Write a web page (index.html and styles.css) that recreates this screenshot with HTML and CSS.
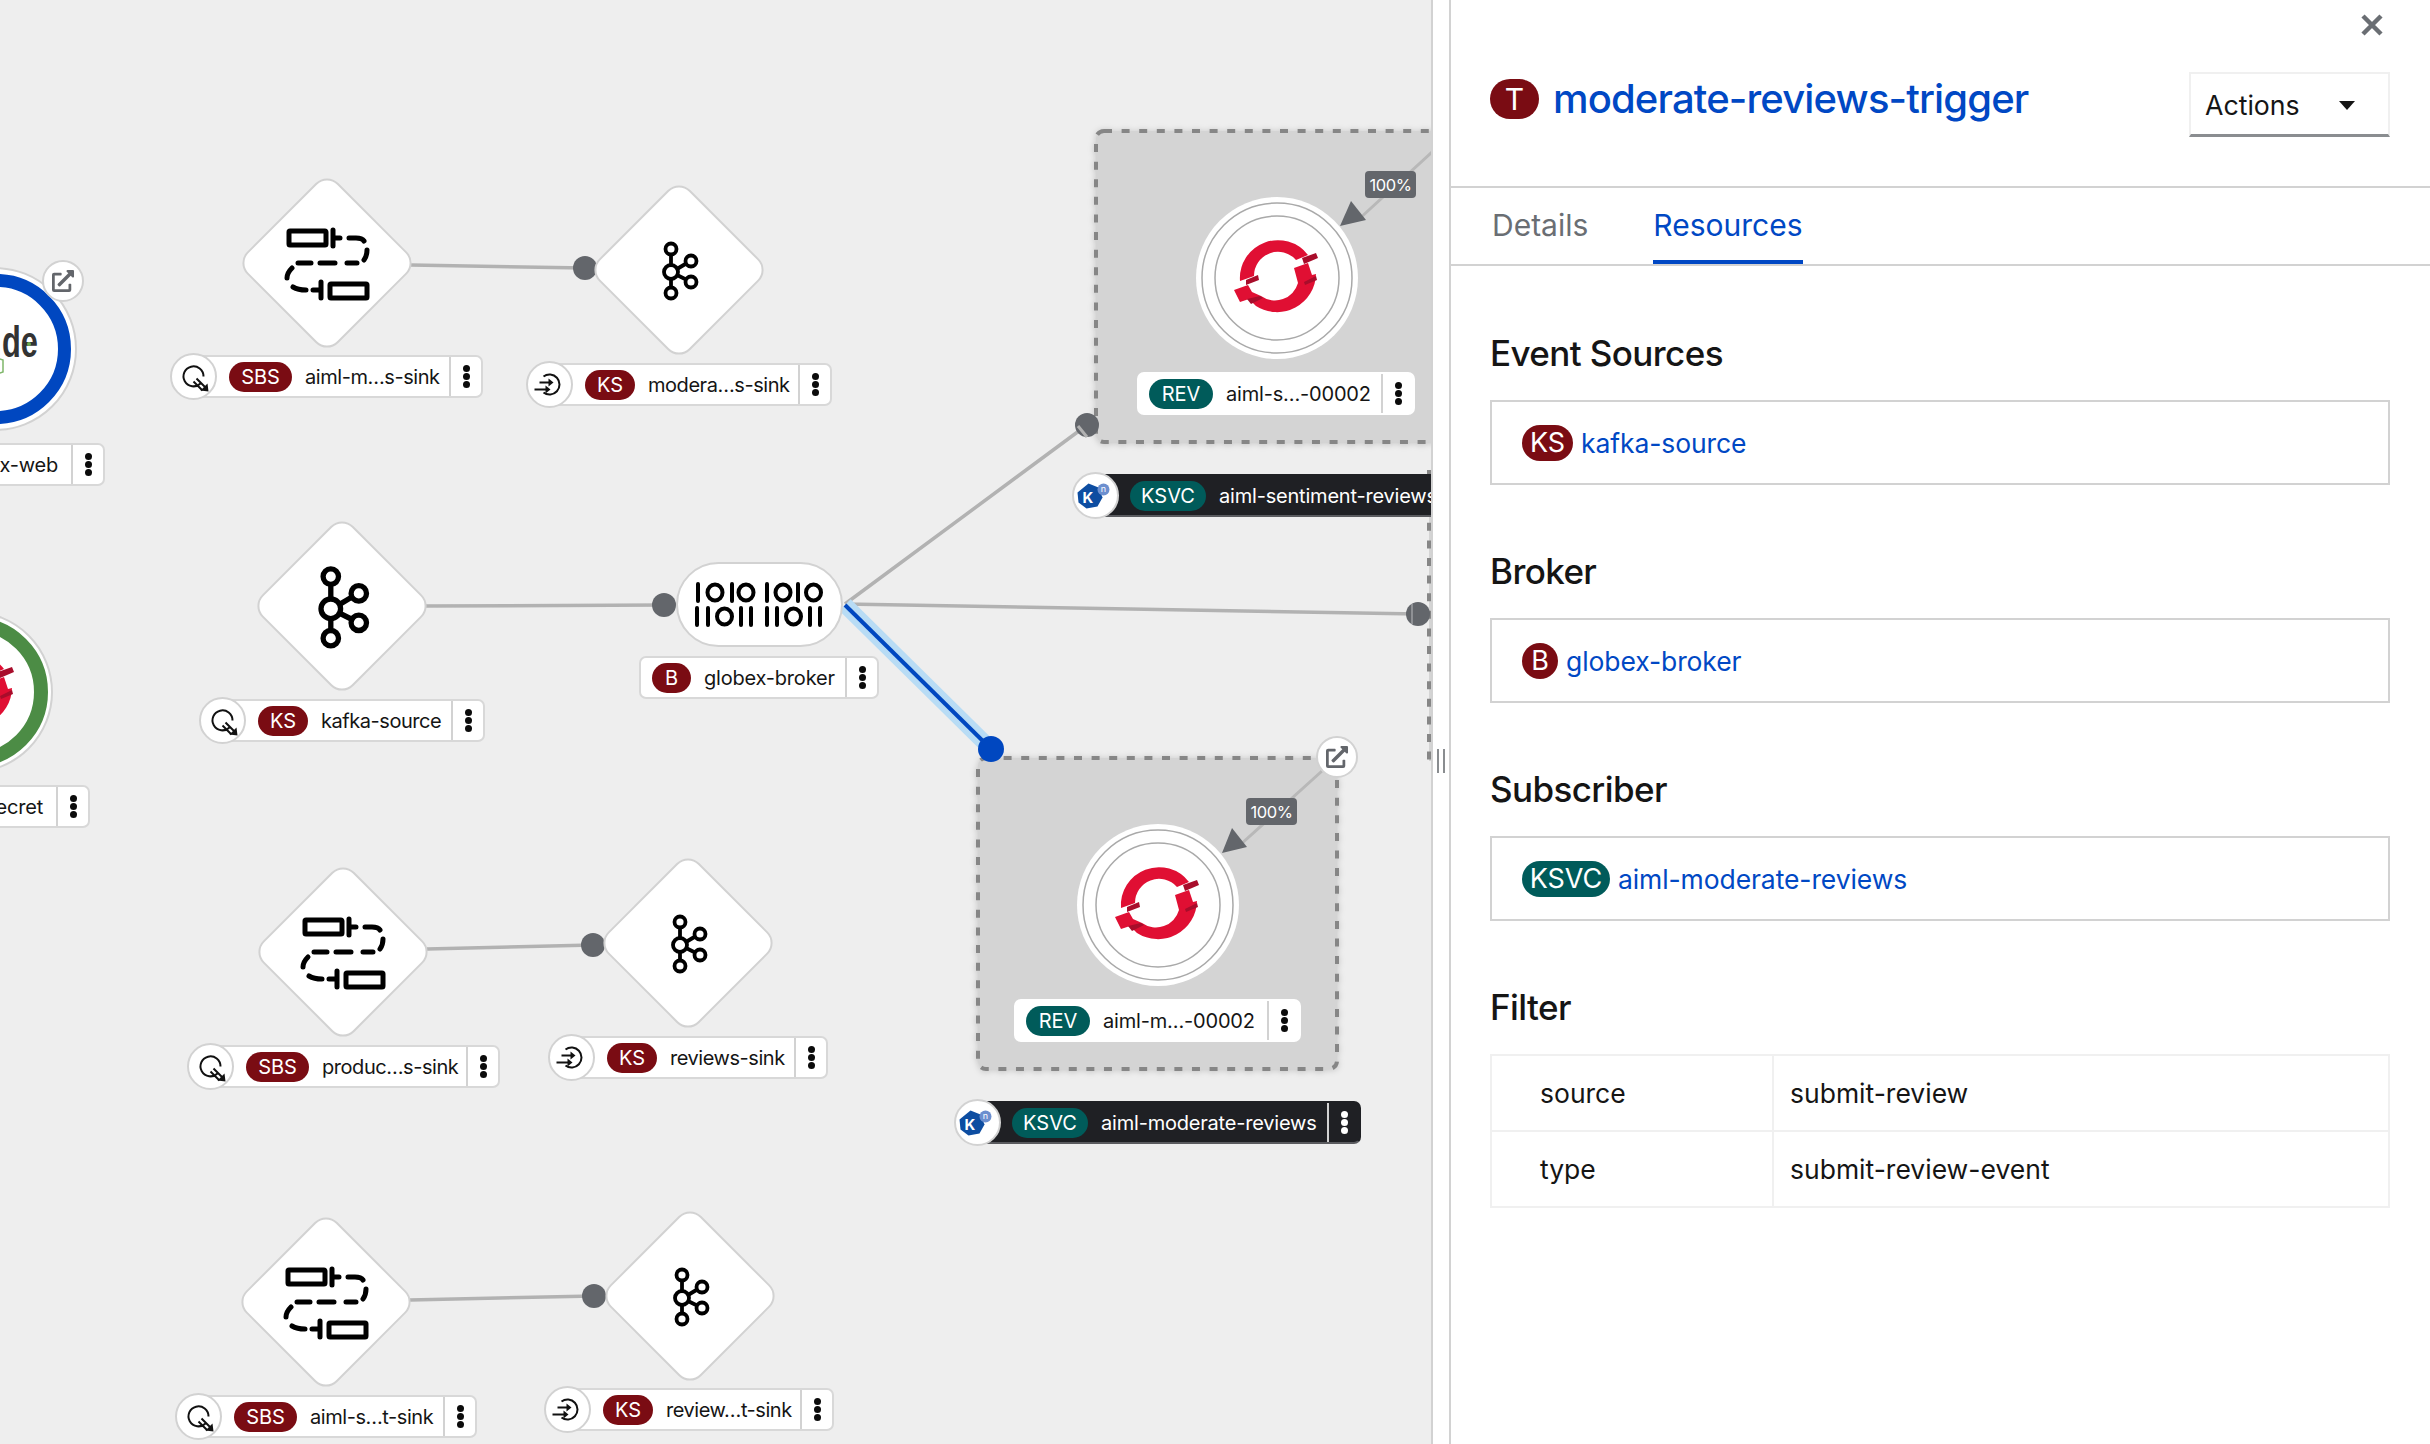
FILE: index.html
```html
<!DOCTYPE html>
<html lang="en">
<head>
<meta charset="utf-8">
<title>Topology</title>
<link rel="stylesheet" href="styles.css">
</head>
<body>
<svg class="defs" width="0" height="0" aria-hidden="true">
  <defs>
    <g id="diamond"><rect x="-63.5" y="-63.5" width="127" height="127" rx="15" transform="rotate(45)" class="node-shape"/></g>
    <g id="sbs" class="ico-stroke">
      <rect x="-38" y="-32" width="37" height="14" rx="1"/>
      <path d="M6-33V-17M6-25H13M22-25H29Q35-25 37-22M40-13Q40-7 37-3M30 0H20M8 0H-7M-16 0H-29M-35 5Q-40 10-40 15M-34 24Q-29 27-21 27M-14 27H-7M-6 19V35"/>
      <rect x="3" y="21" width="37" height="14" rx="1"/>
    </g>
    <g id="kafka" class="ico-kafka">
      <path d="M-8-16V18M-2-1L8-7M-2 5L8 10"/>
      <circle cx="-8" cy="2" r="7"/>
      <circle cx="-8" cy="-21" r="5.5"/>
      <circle cx="-8" cy="23" r="5.5"/>
      <circle cx="12" cy="-9" r="5.5"/>
      <circle cx="12" cy="12" r="5.5"/>
    </g>
    <g id="bits" class="ico-bits">
      <path d="M698 584V601M732 584V601M767 584V601M798 584V601M697 608V625M708 608V625M741 608V625M751 608V625M767 608V625M777 608V625M810 608V625M820 608V625"/>
      <ellipse cx="715" cy="592.500" rx="7.500" ry="8"/>
      <ellipse cx="746" cy="592.500" rx="7.500" ry="8"/>
      <ellipse cx="783" cy="592.500" rx="7.500" ry="8"/>
      <ellipse cx="813.500" cy="592.500" rx="7.500" ry="8"/>
      <ellipse cx="724.500" cy="616.500" rx="7.500" ry="8"/>
      <ellipse cx="793.500" cy="616.500" rx="7.500" ry="8"/>
    </g>
    <g id="shift">
      <path class="logo-red" d="M-37 3A38 38 0 0 1 31-23L19-18A24 24 0 0 0-23-2Z"/>
      <path class="logo-red" d="M17-10L31-15L35-3L39-4A39 39 0 0 1-21 28L-28 21L-37 24L-43 12L-29 7L-25 14L-16 18A24 24 0 0 0 21 5Z"/>
      <path class="logo-dark" d="M25-20L39-25L41-20L27-14ZM27 4L39-2L40 2L28 7ZM-31 2L-19-3L-18 2L-31 7ZM-30 21L-17 18L-14 20L-26 26Z"/>
    </g>
    <g id="rev-node">
      <circle r="81" class="rev-outer"/>
      <circle r="75" class="rev-ring"/>
      <circle r="62" class="rev-ring"/>
      <use href="#shift"/>
    </g>
    <g id="link">
      <circle r="20" class="link-bg"/>
      <path class="link-ico" transform="translate(-11,-11) scale(.043)" d="M432,320H400a16,16,0,0,0-16,16V448H64V128H208a16,16,0,0,0,16-16V80a16,16,0,0,0-16-16H48A48,48,0,0,0,0,112V464a48,48,0,0,0,48,48H400a48,48,0,0,0,48-48V336A16,16,0,0,0,432,320ZM488,0h-128c-21.37,0-32.05,25.91-17,41l35.73,35.73L135,320.37a24,24,0,0,0,0,34L157.67,377a24,24,0,0,0,34,0L435.28,133.32,471,169c15,15,41,4.5,41-17V24A24,24,0,0,0,488,0Z"/>
    </g>
    <g id="sink">
      <path class="ico-thin" d="M7 7A10 10 0 1 1 10 0M3 2L12 11M0 5L9 14"/>
      <path class="ico-head" d="M15 15L14 7L7 14Z"/>
    </g>
    <g id="source">
      <path class="ico-thin" d="M-6-8A10 10 0 1 1-6 8M-10-2H1M-15 5H-2"/>
      <path class="ico-head" d="M4-2L-1-6V2ZM1 5L-4 1V9Z"/>
    </g>
    <g id="kn">
      <path class="kn-hex" d="M-3-13L7-9L11 1L6 10L-5 12L-13 6L-14-4Z" transform="translate(-4,1)"/>
      <circle cx="8" cy="-6" r="6" class="kn-dot"/>
    </g>
  </defs>
</svg>

<main class="app">
  <section class="canvas">
    <svg class="stage" width="1431" height="1444">
      <!-- groups -->
      <rect x="1096" y="131" width="360" height="311" rx="8" class="group"/>
      <rect x="978" y="758" width="359" height="311" rx="8" class="group"/>
      <rect x="1429" y="470" width="10" height="291" class="group-sliver"/>
      <path d="M1429 470V761" class="group-edge"/>

      <!-- plain connectors -->
      <path class="edge" d="M411 265L585 268M425 606L664 605M845 604L1418 614M845 604L1087 425M427 949L593 945M410 1300L594 1296"/>
      <path class="edge-soft" d="M1322 771L1240 845M1432 152L1358 220"/>
      <path class="edge-glow" d="M845 605L991 749"/>
      <path class="edge-active" d="M845 605L991 749"/>

      <!-- connector ends -->
      <circle cx="585" cy="268" r="12" class="dot"/>
      <circle cx="664" cy="605" r="12" class="dot"/>
      <circle cx="593" cy="945" r="12" class="dot"/>
      <circle cx="594" cy="1296" r="12" class="dot"/>
      <circle cx="1087" cy="425" r="12" class="dot"/>
      <path d="M1078 426L1087 437" class="dot-strip"/>
      <circle cx="1418" cy="614" r="12" class="dot"/>
      <path d="M1412 604V624" class="dot-strip-v"/>
      <circle cx="991" cy="749" r="13" class="dot-active"/>

      <!-- event nodes -->
      <use href="#diamond" x="327" y="263"/>
      <use href="#sbs" x="327" y="263"/>
      <use href="#diamond" x="679" y="270"/>
      <use href="#kafka" x="679" y="270"/>
      <use href="#diamond" x="342" y="606"/>
      <g transform="translate(342,606) scale(1.4)"><use href="#kafka"/></g>
      <use href="#diamond" x="343" y="952"/>
      <use href="#sbs" x="343" y="952"/>
      <use href="#diamond" x="688" y="943"/>
      <use href="#kafka" x="688" y="943"/>
      <use href="#diamond" x="326" y="1302"/>
      <use href="#sbs" x="326" y="1302"/>
      <use href="#diamond" x="690" y="1296"/>
      <use href="#kafka" x="690" y="1296"/>

      <!-- broker -->
      <rect x="677" y="563" width="165" height="83" rx="41.500" class="node-shape"/>
      <use href="#bits"/>

      <!-- revisions -->
      <use href="#rev-node" x="1277" y="278"/>
      <use href="#rev-node" x="1158" y="905"/>
      <path class="arrow" d="M1222 853L1232 828L1247 847Z"/>
      <path class="arrow" d="M1340 226L1351 201L1366 220Z"/>
      <rect x="1246" y="798" width="51" height="27" rx="4" class="tag"/>
      <text x="1271.500" y="818" class="tag-text">100%</text>
      <rect x="1365" y="171" width="51" height="27" rx="4" class="tag"/>
      <text x="1390.500" y="191" class="tag-text">100%</text>
      <use href="#link" x="1337" y="757"/>

      <!-- cut-off workloads at the left edge -->
      <circle cx="-5" cy="349" r="81" class="rev-outer-line"/>
      <circle cx="-4" cy="349" r="68.500" class="ring-blue"/>
      <text transform="translate(38,357) scale(.7,1)" class="node-word">de</text>
      <circle cx="29" cy="344" r="2" class="node-green"/>
      <path d="M-3 358L3 360V372L-3 374" class="node-hex"/>
      <use href="#link" x="63" y="281"/>
      <circle cx="-28" cy="692" r="80" class="rev-outer-line"/>
      <circle cx="-27" cy="692" r="68" class="ring-green"/>
      <use href="#shift" x="-27" y="692"/>
    </svg>

    <div class="label l-sbs-a"><span class="lbl-icon"><svg width="43" height="43" viewBox="-21.500 -21.500 43 43"><use href="#sink"/></svg></span><span class="badge b-red b-sbs">SBS</span><span class="name">aiml-m…s-sink</span><span class="kebab"><i></i><i></i><i></i></span></div>
    <div class="label l-ks-a"><span class="lbl-icon"><svg width="43" height="43" viewBox="-21.500 -21.500 43 43"><use href="#source"/></svg></span><span class="badge b-red b-ks">KS</span><span class="name">modera…s-sink</span><span class="kebab"><i></i><i></i><i></i></span></div>
    <div class="label l-ks-src"><span class="lbl-icon"><svg width="43" height="43" viewBox="-21.500 -21.500 43 43"><use href="#sink"/></svg></span><span class="badge b-red b-ks">KS</span><span class="name">kafka-source</span><span class="kebab"><i></i><i></i><i></i></span></div>
    <div class="label l-broker"><span class="badge b-red b-b">B</span><span class="name">globex-broker</span><span class="kebab"><i></i><i></i><i></i></span></div>
    <div class="label l-sbs-b"><span class="lbl-icon"><svg width="43" height="43" viewBox="-21.500 -21.500 43 43"><use href="#sink"/></svg></span><span class="badge b-red b-sbs">SBS</span><span class="name">produc…s-sink</span><span class="kebab"><i></i><i></i><i></i></span></div>
    <div class="label l-ks-b"><span class="lbl-icon"><svg width="43" height="43" viewBox="-21.500 -21.500 43 43"><use href="#source"/></svg></span><span class="badge b-red b-ks">KS</span><span class="name">reviews-sink</span><span class="kebab"><i></i><i></i><i></i></span></div>
    <div class="label l-sbs-c"><span class="lbl-icon"><svg width="43" height="43" viewBox="-21.500 -21.500 43 43"><use href="#sink"/></svg></span><span class="badge b-red b-sbs">SBS</span><span class="name">aiml-s…t-sink</span><span class="kebab"><i></i><i></i><i></i></span></div>
    <div class="label l-ks-c"><span class="lbl-icon"><svg width="43" height="43" viewBox="-21.500 -21.500 43 43"><use href="#source"/></svg></span><span class="badge b-red b-ks">KS</span><span class="name">review…t-sink</span><span class="kebab"><i></i><i></i><i></i></span></div>
    <div class="label label-rev l-rev-a"><span class="badge b-teal b-rev">REV</span><span class="name">aiml-s…-00002</span><span class="kebab"><i></i><i></i><i></i></span></div>
    <div class="label label-rev l-rev-b"><span class="badge b-teal b-rev">REV</span><span class="name">aiml-m…-00002</span><span class="kebab"><i></i><i></i><i></i></span></div>
    <div class="label label-dark l-ksvc-a"><span class="lbl-icon"><svg width="43" height="43" viewBox="-21.500 -21.500 43 43"><use href="#kn"/><text x="-7.500" y="7" class="kn-k">K</text><text x="8" y="-3.500" class="kn-n">n</text></svg></span><span class="badge b-teal b-ksvc">KSVC</span><span class="name">aiml-sentiment-reviews</span></div>
    <div class="label label-dark l-ksvc-b"><span class="lbl-icon"><svg width="43" height="43" viewBox="-21.500 -21.500 43 43"><use href="#kn"/><text x="-7.500" y="7" class="kn-k">K</text><text x="8" y="-3.500" class="kn-n">n</text></svg></span><span class="badge b-teal b-ksvc">KSVC</span><span class="name">aiml-moderate-reviews</span><span class="kebab"><i></i><i></i><i></i></span></div>
    <div class="label l-web"><span class="name name-end">globex-web</span><span class="kebab"><i></i><i></i><i></i></span></div>
    <div class="label l-secret"><span class="name name-end">secret</span><span class="kebab"><i></i><i></i><i></i></span></div>
  </section>

  <div class="gutter"><span class="handle"></span></div>

  <aside class="panel">
    <header class="panel-head">
      <div class="close-row"><svg class="close" width="24" height="24" viewBox="0 0 24 24"><path d="M3 3L21 21M21 3L3 21"/></svg></div>
      <div class="title-row">
        <h1 class="title"><span class="pill pill-red pill-title">T</span><a class="title-link">moderate-reviews-trigger</a></h1>
        <button class="actions" type="button"><span>Actions</span><span class="caret"></span></button>
      </div>
    </header>
    <nav class="tabs">
      <span class="tab">Details</span>
      <span class="tab tab-on">Resources</span>
    </nav>
    <div class="panel-body">
      <section class="res">
        <h2 class="res-title">Event Sources</h2>
        <div class="res-box"><span class="pill pill-red pill-ks">KS</span><a class="res-link">kafka-source</a></div>
      </section>
      <section class="res">
        <h2 class="res-title">Broker</h2>
        <div class="res-box"><span class="pill pill-red pill-b">B</span><a class="res-link">globex-broker</a></div>
      </section>
      <section class="res">
        <h2 class="res-title">Subscriber</h2>
        <div class="res-box"><span class="pill pill-teal pill-ksvc">KSVC</span><a class="res-link">aiml-moderate-reviews</a></div>
      </section>
      <section class="res">
        <h2 class="res-title">Filter</h2>
        <table class="filter">
          <tr><td class="f-key">source</td><td class="f-val">submit-review</td></tr>
          <tr><td class="f-key">type</td><td class="f-val">submit-review-event</td></tr>
        </table>
      </section>
    </div>
  </aside>
</main>
</body>
</html>
```

FILE: styles.css
```css
* { box-sizing: border-box; }
html, body { margin: 0; padding: 0; height: 100%; overflow: hidden; }
body { font-family: Inter, "Open Sans", sans-serif; color: #151515; background: #fff; }
.defs { position: absolute; }
.app { display: flex; width: 2430px; height: 1444px; }

/* canvas */
.canvas { position: relative; flex: 0 0 1431px; height: 100%; overflow: hidden; background: #eeeeee; }
.stage { position: absolute; left: 0; top: 0; }
.node-shape { fill: #fff; stroke: #d2d2d2; stroke-width: 2; }
.ico-stroke { fill: none; stroke: #000; stroke-width: 5; stroke-linecap: round; }
.ico-stroke rect { stroke-linecap: butt; }
.ico-bits { fill: none; stroke: #000; stroke-width: 4; stroke-linecap: round; }
.ico-kafka { fill: #fff; stroke: #000; stroke-width: 3.800; }
.ico-kafka path { fill: none; }
.ico-thin { fill: none; stroke: #111; stroke-width: 2; }
.ico-head { fill: #111; }
.logo-red { fill: #e00f33; }
.logo-dark { fill: #a80d2b; }
.group { fill: #d4d4d4; stroke: #868686; stroke-width: 4; stroke-dasharray: 8 9.600; filter: drop-shadow(0 1px 3px rgba(0,0,0,.18)); }
.group-sliver { fill: #d4d4d4; }
.group-edge { fill: none; stroke: #868686; stroke-width: 4; stroke-dasharray: 8 9.600; }
.edge { fill: none; stroke: #b2b2b2; stroke-width: 3.500; }
.edge-soft { fill: none; stroke: #b8b8b8; stroke-width: 3; }
.edge-glow { fill: none; stroke: #b8dcf5; stroke-width: 16; }
.edge-active { fill: none; stroke: #0047c0; stroke-width: 4; }
.dot { fill: #63666b; }
.dot-strip { fill: none; stroke: #b2b2b2; stroke-width: 3; }
.dot-strip-v { fill: none; stroke: #8f9195; stroke-width: 2; }
.dot-active { fill: #0047c0; }
.rev-outer { fill: #fff; }
.rev-ring { fill: #fff; stroke: #a9a9a9; stroke-width: 1.500; }
.rev-outer-line { fill: #fff; stroke: #d2d2d2; stroke-width: 2; }
.ring-blue { fill: #fff; stroke: #0047c0; stroke-width: 13; }
.ring-green { fill: #fff; stroke: #4c8c45; stroke-width: 14; }
.node-word { font-family: "Liberation Sans", sans-serif; font-weight: 700; font-size: 44px; fill: #333; text-anchor: end; }
.node-green { fill: #6cab4f; }
.node-hex { fill: none; stroke: #7fb76a; stroke-width: 1.500; }
.arrow { fill: #63666b; }
.tag { fill: #63666b; }
.tag-text { fill: #fff; font-size: 16.500px; text-anchor: middle; letter-spacing: -.4px; }
.link-bg { fill: #fff; stroke: #d2d2d2; stroke-width: 2; }
.link-ico { fill: #63666b; }
.kn-hex { fill: #0d4da1; }
.kn-k { fill: #fff; font-size: 15px; font-weight: 700; text-anchor: middle; }
.kn-dot { fill: #6c8fcf; }
.kn-n { fill: #fff; font-size: 9px; text-anchor: middle; }

/* node labels */
.label { position: absolute; display: flex; align-items: center; height: 43px; padding-left: 34px; background: #fff; border: 2px solid #d8d8d8; border-radius: 7px; font-size: 20px; color: #151515; }
.label-rev { border-color: #fff; padding-left: 10px; }
.label-dark { background: #1f2024; border-color: #1f2024; border-bottom-color: #5a5b5f; color: #fff; padding-left: 33px; }
.lbl-icon { position: absolute; left: -25px; top: -4px; width: 47px; height: 47px; display: flex; align-items: center; justify-content: center; background: #fff; border: 2px solid #d2d2d2; border-radius: 50%; }
.badge { flex: 0 0 auto; display: flex; align-items: center; justify-content: center; height: 30px; border-radius: 15px; color: #fff; font-size: 20px; letter-spacing: 0; }
.b-red { background: #7a0c13; }
.b-teal { background: #005b5a; }
.b-sbs { width: 63px; }
.b-ks { width: 50px; }
.b-b { width: 39px; }
.b-rev { width: 64px; }
.b-ksvc { width: 76px; }
.name { flex: 1 1 auto; min-width: 0; padding-left: 13px; white-space: nowrap; overflow: hidden; letter-spacing: -.45px; }
.label-rev .name, .label-dark .name, .l-broker .name, .l-web .name, .l-secret .name { letter-spacing: -.2px; }
.name-end { padding: 0 13px 0 0; text-align: right; }
.kebab { flex: 0 0 32px; align-self: stretch; display: flex; flex-direction: column; align-items: center; justify-content: center; gap: 1px; border-left: 2px solid #d2d2d2; }
.kebab i { display: block; width: 7px; height: 7px; border-radius: 50%; background: #0b0b0b; }
.label-dark .kebab { border-left-color: #d2d2d2; }
.label-dark .kebab i { background: #fff; }

.l-sbs-a { left: 193px; top: 355px; width: 290px; }
.l-ks-a { left: 549px; top: 363px; width: 283px; }
.l-ks-src { left: 222px; top: 699px; width: 263px; }
.l-broker { left: 639px; top: 656px; width: 240px; padding-left: 11px; }
.l-sbs-b { left: 210px; top: 1045px; width: 290px; }
.l-ks-b { left: 571px; top: 1036px; width: 257px; }
.l-sbs-c { left: 198px; top: 1395px; width: 279px; }
.l-ks-c { left: 567px; top: 1388px; width: 267px; }
.l-rev-a { left: 1137px; top: 372px; width: 278px; }
.l-rev-b { left: 1014px; top: 999px; width: 287px; }
.l-ksvc-a { left: 1095px; top: 474px; width: 400px; }
.l-ksvc-b { left: 977px; top: 1101px; width: 384px; }
.l-web { left: -60px; top: 443px; width: 165px; padding-left: 0; }
.l-secret { left: -60px; top: 785px; width: 150px; padding-left: 0; }

/* gutter */
.gutter { flex: 0 0 18px; display: flex; align-items: flex-start; justify-content: center; border-left: 2px solid #d2d2d2; background: #fff; }
.handle { display: block; width: 8px; height: 24px; margin-top: 749px; border-left: 2px solid #8a8d90; border-right: 2px solid #8a8d90; }

/* panel */
.panel { flex: 1 1 auto; min-width: 0; display: flex; flex-direction: column; border-left: 2px solid #d2d2d2; background: #fff; }
.panel-head { flex: 0 0 188px; padding: 0 40px 0 39px; border-bottom: 2px solid #d2d2d2; }
.close-row { height: 72px; display: flex; justify-content: flex-end; padding: 13px 6px 0 0; align-items: flex-start; }
.close path { fill: none; stroke: #6a6e73; stroke-width: 4.500; }
.title-row { display: flex; justify-content: space-between; align-items: flex-start; }
.title { margin: 7px 0 0; display: flex; align-items: center; gap: 14px; height: 40px; font-size: 40px; font-weight: 500; line-height: 38px; }
.title-link { color: #0048c4; letter-spacing: -.85px; }
.pill { display: inline-flex; align-items: center; justify-content: center; color: #fff; flex: 0 0 auto; }
.pill-red { background: #7a0c13; }
.pill-teal { background: #005b5a; }
.pill-title { width: 49px; height: 40px; border-radius: 20px; font-size: 30px; font-weight: 400; }
.actions { width: 201px; height: 65px; padding: 2px 0 0 14px; display: flex; align-items: center; font: inherit; font-size: 26.700px; color: #151515; background: #fff; border: 2px solid #f0f0f0; border-bottom: 3px solid #8a8d90; }
.caret { width: 0; height: 0; margin-left: 39px; border-left: 8px solid transparent; border-right: 8px solid transparent; border-top: 9px solid #151515; }

.tabs { flex: 0 0 78px; display: flex; gap: 65px; padding-left: 41px; border-bottom: 2px solid #d2d2d2; font-size: 30px; }
.tab { display: flex; align-items: center; height: 100%; padding-bottom: 2px; color: #6a6e73; }
.tab-on { color: #0048c4; border-bottom: 4px solid #0048c4; padding: 2px 0 0; }

.panel-body { padding: 65px 40px 0 39px; }
.res { margin-bottom: 64px; }
.res-title { margin: 0 0 23px; height: 46px; line-height: 45px; font-size: 35px; font-weight: 500; letter-spacing: -.6px; color: #151515; }
.res-box { display: flex; align-items: center; gap: 8px; height: 85px; padding-left: 30px; border: 2px solid #d2d2d2; }
.res-box .pill { height: 36px; border-radius: 18px; font-size: 27px; }
.pill-ks { width: 51px; }
.pill-b { width: 36px; }
.pill-ksvc { width: 88px; }
.res-link { color: #0048c4; font-size: 26.500px; letter-spacing: -.1px; }

.filter { width: 100%; border-collapse: collapse; font-size: 26.500px; }
.filter td { height: 76px; border: 2px solid #f0f0f0; padding: 0; }
.f-key { width: 282px; padding-left: 48px !important; }
.f-val { padding-left: 16px !important; }
```
